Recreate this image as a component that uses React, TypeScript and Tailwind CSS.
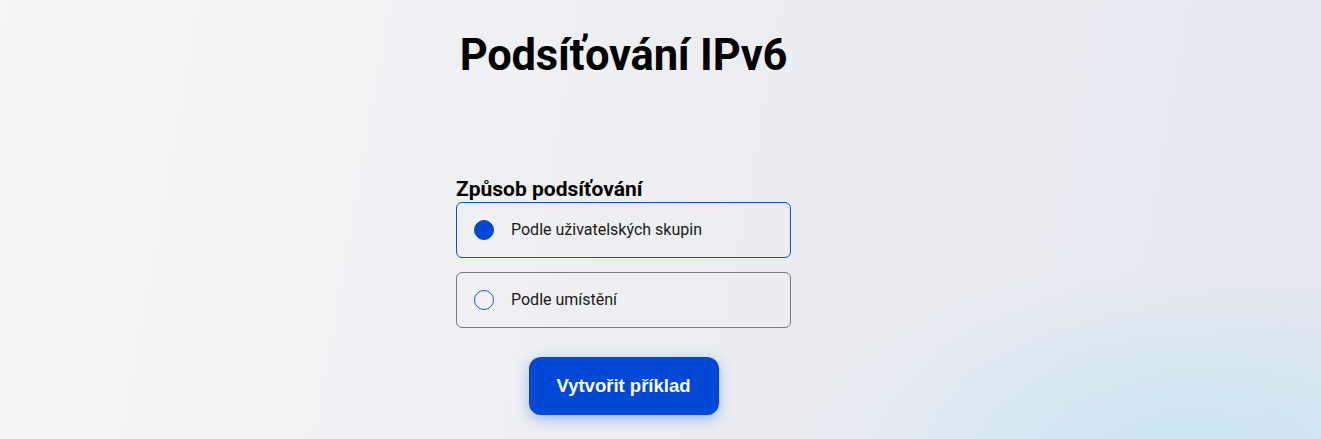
import { useState } from 'react'

const options = [
  { id: 'groups', label: 'Podle uživatelských skupin' },
  { id: 'location', label: 'Podle umístění' },
]

export default function App() {
  const [method, setMethod] = useState('groups')

  return (
    <div
      className="min-h-screen w-full bg-[radial-gradient(ellipse_30%_45%_at_90%_105%,#c8e5f0_0%,rgba(200,229,240,0)_100%),linear-gradient(100deg,#f6f6f6_0%,#eeeff3_45%,#e5e7ef_100%)] text-black"
      style={{ fontFamily: 'Roboto, "Noto Sans", sans-serif' }}
    >
      <div className="ml-[456px] w-[335px] flex flex-col items-center pt-[30px] pb-6">
        <h1 className="text-[43.5px] leading-[52px] font-bold tracking-[-0.2px] whitespace-nowrap">Podsíťování IPv6</h1>

        <div className="w-full mt-[94px]">
          <div className="text-[21px] leading-[26px] font-bold">Způsob podsíťování</div>
          <div className="flex flex-col gap-[14px]">
            {options.map((o) => {
              const active = method === o.id
              return (
                <button
                  key={o.id}
                  onClick={() => setMethod(o.id)}
                  className={
                    active
                      ? 'h-[56px] w-full flex items-center gap-[17px] px-[17px] rounded-[6px] border border-[#0a4fd8] text-left'
                      : 'h-[56px] w-full flex items-center gap-[17px] px-[17px] rounded-[6px] border border-[#7a7a7e] text-left'
                  }
                >
                  <span
                    className={
                      active
                        ? 'w-[20px] h-[20px] rounded-full bg-[#0148d6] border border-[#0148d6]'
                        : 'w-[20px] h-[20px] rounded-full border border-[#1a56e0]'
                    }
                  />
                  <span className="text-[16px] text-[#1a1a1a]">{o.label}</span>
                </button>
              )
            })}
          </div>
        </div>

        <button
          className="mt-[29px] w-[190px] h-[58px] rounded-[12px] bg-[#0148d6] text-white text-[18.5px] font-bold shadow-[0_4px_14px_rgba(1,72,214,0.35)]"
          style={{ fontFamily: '"Liberation Sans", Arial, sans-serif' }}
        >
          Vytvořit příklad
        </button>
      </div>
    </div>
  )
}
